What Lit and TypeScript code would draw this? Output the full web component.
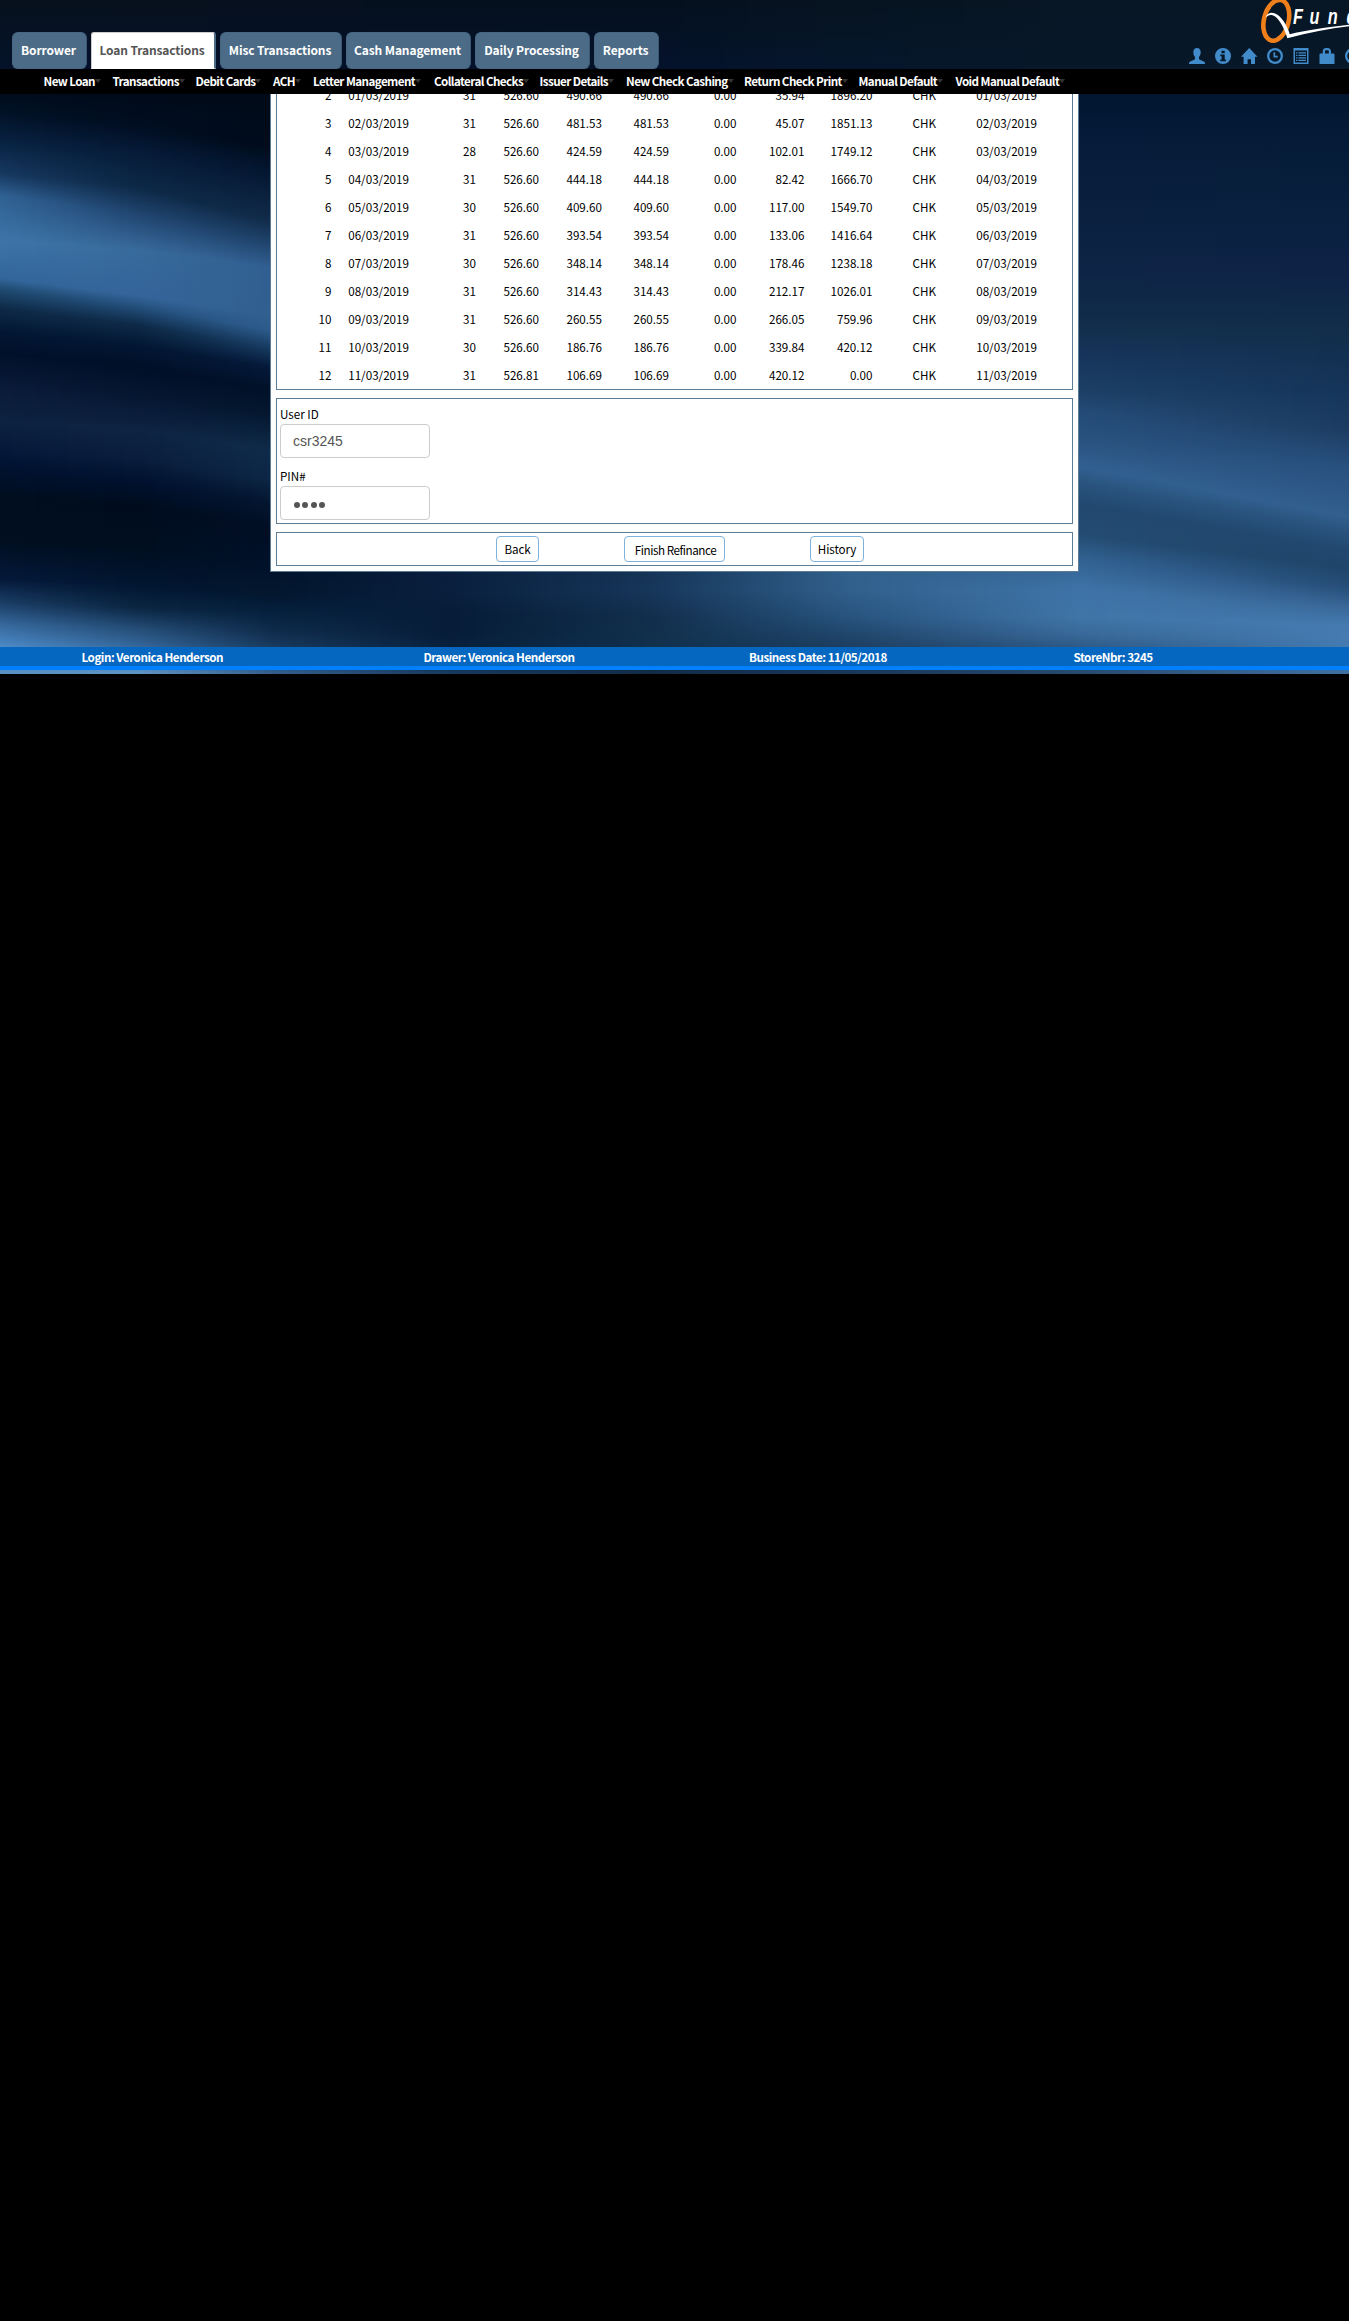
import { LitElement, html, css, svg } from "lit";
import { customElement } from "lit/decorators.js";

type Stop = [number, string];
interface Column {
  x: number;
  stops: Stop[];
}

// Colour columns of the backdrop; every column has the same number of stops.
const COLUMNS: Column[] = [
  { x: 0, stops: [[0, "#07111d"], [69, "#04132a"], [94, "#000c1c"], [112, "#011226"], [139, "#07203f"], [173, "#16385f"], [195, "#2f6092"], [240, "#3d74a8"], [278, "#33669a"], [289, "#1f4a70"], [308, "#0e2a48"], [331, "#021733"], [353, "#01102a"], [391, "#0a1c3a"], [421, "#0d2140"], [451, "#05183a"], [466, "#001230"], [496, "#000e20"], [541, "#000e20"], [579, "#04193a"], [602, "#1a3c63"], [624, "#35679b"], [647, "#4d8ac8"], [674, "#5a90c4"]] },
  { x: 140, stops: [[0, "#07111d"], [69, "#04102a"], [94, "#000a18"], [126, "#010d22"], [152, "#061b38"], [187, "#0c2846"], [215, "#20456f"], [250, "#386a9c"], [296, "#34649a"], [307, "#234f7c"], [325, "#0e2a48"], [346, "#021733"], [366, "#010f28"], [395, "#051630"], [430, "#0e2342"], [458, "#0a1d3c"], [480, "#001230"], [505, "#000c1e"], [548, "#000e20"], [585, "#011630"], [608, "#0a2542"], [628, "#234b74"], [647, "#35679b"], [674, "#6194c6"]] },
  { x: 275, stops: [[0, "#06101e"], [69, "#04102a"], [94, "#000a18"], [148, "#000c1c"], [170, "#03152e"], [222, "#112b4a"], [246, "#20456e"], [268, "#305e90"], [316, "#315f8f"], [331, "#2d5b8c"], [350, "#163a60"], [368, "#05193a"], [391, "#001128"], [414, "#04172f"], [451, "#0f2b4a"], [481, "#0c2645"], [504, "#03162f"], [530, "#010e24"], [565, "#00122a"], [595, "#03172f"], [612, "#05203d"], [632, "#0f2c4c"], [647, "#183a5e"], [674, "#33608f"]] },
  { x: 450, stops: [[0, "#05101e"], [69, "#04112a"], [94, "#000a18"], [148, "#000c1c"], [170, "#03152e"], [222, "#112b4a"], [246, "#20456e"], [268, "#305e90"], [316, "#315f8f"], [331, "#2d5b8c"], [350, "#163a60"], [368, "#05193a"], [391, "#001128"], [414, "#04172f"], [451, "#0f2b4a"], [481, "#0c2645"], [504, "#03162f"], [530, "#010e24"], [565, "#0a1f3f"], [595, "#091f3d"], [612, "#061c38"], [632, "#061c38"], [647, "#08203c"], [674, "#173a60"]] },
  { x: 650, stops: [[0, "#05101e"], [69, "#04122c"], [94, "#021630"], [110, "#021630"], [128, "#041a38"], [203, "#0a1f3e"], [240, "#0a1f3e"], [271, "#0e2446"], [316, "#102b49"], [331, "#102b49"], [353, "#16345a"], [391, "#1c3f66"], [410, "#28507e"], [429, "#28507e"], [466, "#316090"], [485, "#28527c"], [504, "#224870"], [534, "#244b72"], [557, "#133253"], [590, "#16365a"], [617, "#122e4c"], [635, "#10304c"], [647, "#10304c"], [674, "#122c48"]] },
  { x: 850, stops: [[0, "#06131f"], [69, "#05162c"], [94, "#021630"], [110, "#021630"], [128, "#041a38"], [203, "#0a1f3e"], [240, "#0a1f3e"], [271, "#0e2446"], [316, "#102b49"], [331, "#102b49"], [353, "#16345a"], [391, "#1c3f66"], [410, "#28507e"], [429, "#28507e"], [466, "#316090"], [485, "#28527c"], [504, "#224870"], [534, "#244b72"], [557, "#31608c"], [590, "#31608c"], [617, "#27537e"], [635, "#20456b"], [647, "#1d3e60"], [674, "#183659"]] },
  { x: 1080, stops: [[0, "#071624"], [69, "#07182a"], [94, "#021630"], [110, "#021832"], [128, "#041a38"], [203, "#0a1f3e"], [240, "#0c2242"], [271, "#0e2446"], [316, "#102b49"], [331, "#122f4d"], [353, "#16345a"], [391, "#1c3f66"], [412, "#244b77"], [440, "#29527f"], [466, "#316090"], [485, "#28527c"], [504, "#224870"], [534, "#244b72"], [557, "#30608f"], [590, "#3f73a8"], [617, "#4075a8"], [635, "#386898"], [647, "#2e5a86"], [674, "#26496e"]] },
  { x: 1349, stops: [[0, "#071624"], [69, "#07182a"], [94, "#021630"], [110, "#021832"], [128, "#041a36"], [203, "#08203e"], [240, "#0b2142"], [271, "#0e2246"], [316, "#102b49"], [331, "#122e4a"], [353, "#123050"], [391, "#15355a"], [429, "#1c3c62"], [466, "#28507e"], [517, "#315f8e"], [534, "#28527c"], [550, "#224870"], [568, "#20456b"], [587, "#264e78"], [609, "#3a699a"], [625, "#447ab0"], [635, "#457bb2"], [647, "#457bb0"], [674, "#3f70a2"]] },
];

const STRIP = 4;
const WIDTH = 1349;

const channels = (hex: string): number[] =>
  [1, 3, 5].map((i) => parseInt(hex.slice(i, i + 2), 16));

function stripGradient(x: number): string {
  let k = 0;
  while (k < COLUMNS.length - 2 && COLUMNS[k + 1].x <= x) k++;
  const a = COLUMNS[k];
  const b = COLUMNS[k + 1];
  const t = Math.min(1, (x - a.x) / (b.x - a.x));
  const stops = a.stops.map(([ya, ca], i) => {
    const [yb, cb] = b.stops[i];
    const from = channels(ca);
    const to = channels(cb);
    const rgb = from.map((v, j) => Math.round(v + (to[j] - v) * t));
    return `rgb(${rgb.join(",")}) ${(ya + (yb - ya) * t).toFixed(1)}px`;
  });
  return `linear-gradient(${stops.join(",")})`;
}

const STRIPS = Array.from({ length: Math.ceil(WIDTH / STRIP) }, (_, i) =>
  stripGradient(i * STRIP + STRIP / 2)
);

const TABS: [string, number][] = [
  ["Borrower", 75],
  ["Loan Transactions", 125],
  ["Misc Transactions", 122],
  ["Cash Management", 125],
  ["Daily Processing", 115],
  ["Reports", 65],
];

const MENU: [string, number][] = [
  ["New Loan", 69],
  ["Transactions", 83],
  ["Debit Cards", 77.5],
  ["ACH", 40],
  ["Letter Management", 121],
  ["Collateral Checks", 105.5],
  ["Issuer Details", 86.5],
  ["New Check Cashing", 118],
  ["Return Check Print", 114.5],
  ["Manual Default", 97],
  ["Void Manual Default", 112],
];

const ROWS: string[][] = [
  ["2", "01/03/2019", "31", "526.60", "490.66", "490.66", "0.00", "35.94", "1896.20", "CHK", "01/03/2019"],
  ["3", "02/03/2019", "31", "526.60", "481.53", "481.53", "0.00", "45.07", "1851.13", "CHK", "02/03/2019"],
  ["4", "03/03/2019", "28", "526.60", "424.59", "424.59", "0.00", "102.01", "1749.12", "CHK", "03/03/2019"],
  ["5", "04/03/2019", "31", "526.60", "444.18", "444.18", "0.00", "82.42", "1666.70", "CHK", "04/03/2019"],
  ["6", "05/03/2019", "30", "526.60", "409.60", "409.60", "0.00", "117.00", "1549.70", "CHK", "05/03/2019"],
  ["7", "06/03/2019", "31", "526.60", "393.54", "393.54", "0.00", "133.06", "1416.64", "CHK", "06/03/2019"],
  ["8", "07/03/2019", "30", "526.60", "348.14", "348.14", "0.00", "178.46", "1238.18", "CHK", "07/03/2019"],
  ["9", "08/03/2019", "31", "526.60", "314.43", "314.43", "0.00", "212.17", "1026.01", "CHK", "08/03/2019"],
  ["10", "09/03/2019", "31", "526.60", "260.55", "260.55", "0.00", "266.05", "759.96", "CHK", "09/03/2019"],
  ["11", "10/03/2019", "30", "526.60", "186.76", "186.76", "0.00", "339.84", "420.12", "CHK", "10/03/2019"],
  ["12", "11/03/2019", "31", "526.81", "106.69", "106.69", "0.00", "420.12", "0.00", "CHK", "11/03/2019"],
];

// Glyph shapes on a 16-unit square.
const ICONS = [
  svg`<path d="M8 0C5.6 0 4.3 1.7 4.3 4.2c0 2 .7 3.7 1.7 4.8v1.6c0 .8-.5 1.1-1.5 1.5L1.2 13.6C.4 14 0 14.5 0 15.2V16h16v-.8c0-.7-.4-1.2-1.2-1.6l-3.3-1.5c-1-.4-1.5-.7-1.5-1.5V9c1-1.1 1.7-2.8 1.7-4.8C11.700 1.7 10.400 0 8 0z"/>`,
  svg`<path fill-rule="evenodd" d="M8 0a8 8 0 100 16A8 8 0 008 0zM6.500 2.700h3.200v2.500H6.500zM5.300 6.500h4.400v5h1.200v1.700H5.300v-1.700h1.300V8.200H5.300z"/>`,
  svg`<path d="M8.200 0L16.500 8.700h-2.500V16H10v-4.800H6.600V16H2.600V8.700H0z"/>`,
  svg`<path fill-rule="evenodd" d="M8 0a8 8 0 100 16A8 8 0 008 0zm0 2.300a5.700 5.700 0 110 11.400A5.700 5.700 0 018 2.300z"/><path d="M6.500 4.200h1.700v3.600h2.600v1.600H6.500z"/>`,
  svg`<path fill-rule="evenodd" d="M.5 0h15v16H.5zM2 2.500v12h12v-12z"/><path d="M3 4.200h1.400v1.300H3zM5.400 4.200H13v1.300H5.400zM3 6.700h1.400V8H3zM5.400 6.700H13V8H5.400zM3 9.200h1.400v1.300H3zM5.400 9.200H13v1.300H5.400zM3 11.700h1.400V13H3zM5.400 11.700H13V13H5.400z"/>`,
  svg`<path fill-rule="evenodd" d="M3.700 5.500V3.200C3.700 1.300 5 0 6.800 0h2C10.600 0 12 1.300 12 3.200v2.300h2.400c.7 0 1.100.4 1.100 1.100V16H.5V6.600c0-.7.400-1.100 1.100-1.100zM6 5.500h3.800V3.300c0-.7-.4-1.100-1-1.100H7c-.6 0-1 .4-1 1.100z"/>`,
  svg`<path fill-rule="evenodd" d="M8 0a8 8 0 100 16A8 8 0 008 0zm0 2.300a5.700 5.700 0 110 11.400A5.700 5.700 0 018 2.300z"/>`,
];

@customElement("app-root")
export class AppRoot extends LitElement {
  static styles = css`
    :host {
      display: block;
      width: 1349px;
      height: 2321px;
      background: #000;
      overflow: hidden;
      font-family: "Noto Sans CJK SC", "Noto Sans", sans-serif;
      font-size: 11.65px;
      color: #000;
    }
    * {
      box-sizing: border-box;
    }
    .screen {
      position: relative;
      display: flex;
      flex-direction: column;
      height: 674px;
      overflow: hidden;
    }
    .backdrop {
      position: absolute;
      inset: 0;
      display: flex;
    }
    .strip {
      flex: 0 0 4px;
    }
    .header,
    .menu,
    .content,
    .footer {
      position: relative;
    }
    .header {
      flex: 0 0 69px;
      display: flex;
      justify-content: space-between;
      align-items: flex-end;
    }
    .tabs {
      display: flex;
      gap: 4px;
      padding-left: 12px;
    }
    .tab {
      height: 37px;
      border-radius: 6px;
      background: #4c6b86;
      border: 1px solid #476784;
      border-right-color: #3a5873;
      padding-right: 2px;
      color: #fff;
      font-weight: 700;
      font-size: 12px;
      letter-spacing: -0.12px;
      line-height: 34px;
      text-align: center;
      white-space: nowrap;
    }
    .tab.active {
      background: #fff;
      color: #555;
      border: 1px solid #ccc;
      border-right: 2px solid #4c6b86;
      border-bottom-color: #fff;
      border-radius: 3px 3px 0 0;
    }
    .brand {
      flex: 0 0 160px;
      height: 69px;
      display: flex;
      flex-direction: column;
      justify-content: space-between;
      padding-bottom: 5px;
      overflow: hidden;
    }
    .logo {
      display: block;
      width: 160px;
      height: 46px;
    }
    .logo-text {
      font: italic 700 22px "Liberation Sans", Arial, sans-serif;
      fill: #fff;
    }
    .icons {
      display: flex;
      gap: 10px;
      height: 16px;
    }
    .icon {
      flex: 0 0 16px;
      height: 16px;
      fill: #428bca;
      overflow: visible;
    }
    .menu {
      flex: 0 0 25px;
      display: flex;
      background: #000;
      padding-left: 43.5px;
    }
    .item {
      display: flex;
      align-items: center;
      color: #fff;
      font-weight: 700;
      letter-spacing: -0.58px;
      line-height: 24px;
      height: 24px;
      white-space: nowrap;
    }
    .item::after {
      content: "";
      border: 3px solid transparent;
      border-top: 4px solid #333;
      border-bottom: 0;
    }
    .content {
      flex: 0 0 553px;
      overflow: hidden;
    }
    .panel {
      width: 809px;
      height: 478px;
      margin-left: 270px;
      border: 1px solid #5b7d98;
      border-top: 0;
      background: #fff;
      padding: 0 5px 5px;
      display: flex;
      flex-direction: column;
      gap: 8px;
    }
    .box {
      border: 1px solid #5b7d98;
      min-height: 0;
    }
    .schedule {
      flex: 0 0 296px;
      border-top: 0;
      overflow: hidden;
      display: flex;
      flex-direction: column;
      justify-content: flex-end;
    }
    .row {
      flex: 0 0 28px;
      display: grid;
      grid-template-columns: 54.5px 77.5px 67px 63px 63px 67px 67.500px 68px 68px 63.500px 101px;
      line-height: 27px;
      text-align: right;
    }
    .signin {
      height: 126px;
      padding: 6px 3px 0;
    }
    .label {
      display: block;
      height: 19px;
      line-height: 17px;
    }
    .field {
      display: flex;
      align-items: center;
      width: 150px;
      height: 34px;
      border: 1px solid #ccc;
      border-radius: 4px;
      padding-left: 12px;
      color: #555;
      font-family: "Liberation Sans", Arial, sans-serif;
      font-size: 14px;
    }
    .field + .label {
      margin-top: 9px;
    }
    .mask {
      gap: 2.3px;
      padding: 4px 0 0 13px;
    }
    .dot {
      width: 6px;
      height: 6px;
      border-radius: 50%;
      background: #555;
    }
    .actions {
      height: 34px;
      display: flex;
      padding: 3px 0 0 219px;
    }
    .btn {
      height: 26px;
      border: 1px solid #7fb1dd;
      border-radius: 4px;
      background: #fff;
      padding: 0;
      font: inherit;
      color: #000;
      line-height: 24px;
      letter-spacing: -0.1px;
      white-space: nowrap;
    }
    .back {
      width: 43px;
    }
    .finish {
      width: 101px;
      margin-left: 85px;
      padding: 1px 0 0 2px;
      letter-spacing: -0.45px;
    }
    .history {
      width: 54px;
      margin-left: 85px;
    }
    .footer {
      flex: 0 0 22px;
      display: grid;
      grid-template-columns: 342px 325.500px 324.500px 1fr;
      padding-left: 81.500px;
      background: #0667c0;
      border-bottom: 4px solid #0080ff;
      color: #fff;
      font-weight: 700;
      letter-spacing: -0.48px;
      line-height: 19px;
    }
  `;

  render() {
    return html`
      <div class="screen">
        <div class="backdrop">
          ${STRIPS.map((g) => html`<div class="strip" style="background:${g}"></div>`)}
        </div>
        <header class="header">
          <nav class="tabs">
            ${TABS.map(
              ([name, width], i) =>
                html`<div class="tab ${i === 1 ? "active" : ""}" style="width:${width}px">${name}</div>`
            )}
          </nav>
          <div class="brand">
            <svg class="logo" viewBox="0 0 160 46">
              <ellipse cx="87.300" cy="20.300" rx="12.300" ry="20.800" transform="rotate(14 87.300 20.300)" fill="none" stroke="#ee7f1a" stroke-width="4.600" />
              <path d="M76.800 16.500C79 13 82 12 85.500 13.300C92.500 16 98 25 100.800 34.300C116 30.500 138 27 160 24.800V26.300C140 28.500 120 32.500 98.300 38.300C96 30 91.500 21 86.500 16.800C83 14.200 80 14.500 77.300 17z" fill="#fff" />
              <g transform="scale(0.740 1)">
                <text class="logo-text" y="24" x="140.500 163 187.500 213">Fund</text>
              </g>
            </svg>
            <div class="icons">
              ${ICONS.map((shape) => html`<svg class="icon" viewBox="0 0 16 16">${shape}</svg>`)}
            </div>
          </div>
        </header>
        <nav class="menu">
          ${MENU.map(([name, width]) => html`<div class="item" style="width:${width}px">${name}</div>`)}
        </nav>
        <main class="content">
          <div class="panel">
            <div class="box schedule">
              ${ROWS.map((cells) => html`<div class="row">${cells.map((c) => html`<span>${c}</span>`)}</div>`)}
            </div>
            <div class="box signin">
              <label class="label">User ID</label>
              <div class="field">csr3245</div>
              <label class="label">PIN#</label>
              <div class="field mask">${[0, 1, 2, 3].map(() => html`<span class="dot"></span>`)}</div>
            </div>
            <div class="box actions">
              <button class="btn back">Back</button>
              <button class="btn finish">Finish Refinance</button>
              <button class="btn history">History</button>
            </div>
          </div>
        </main>
        <footer class="footer">
          <span>Login: Veronica Henderson</span>
          <span>Drawer: Veronica Henderson</span>
          <span>Business Date: 11/05/2018</span>
          <span>StoreNbr: 3245</span>
        </footer>
      </div>
    `;
  }
}
